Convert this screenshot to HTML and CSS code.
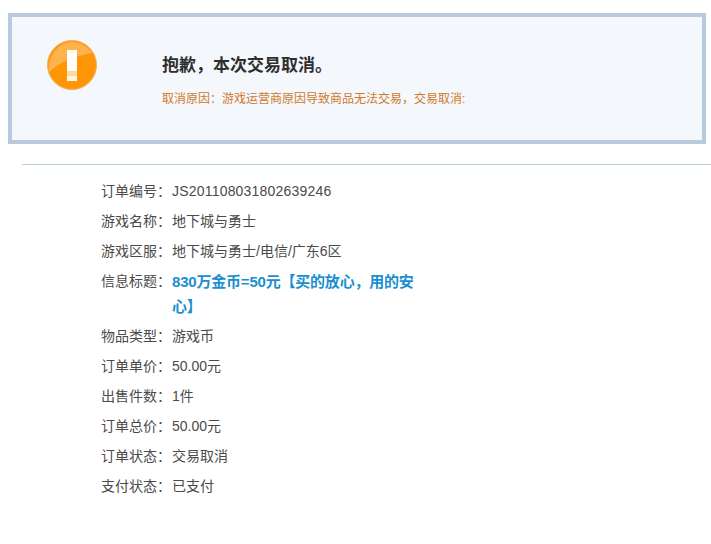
FILE: index.html
```html
<!DOCTYPE html>
<html lang="zh-CN">
<head>
<meta charset="utf-8">
<title>交易取消</title>
<link rel="stylesheet" href="styles.css">
</head>
<body>
<section class="notice">
  <svg class="notice-icon" width="52" height="52" viewBox="0 0 52 52" aria-hidden="true">
    <circle cx="26" cy="26" r="24.5" fill="#ff9608" stroke="#f7ad5e" stroke-width="1"/>
    <path d="M3 33C1 17 13 3 26 3c9 0 16 5 20 11C30 17 15 22 3 33z" fill="#ffffff" opacity="0.28"/>
    <rect x="21" y="11" width="10" height="21" fill="#fffdf6"/>
    <rect x="21" y="32" width="10" height="5" fill="#ffd9a0"/>
    <rect x="21" y="37" width="10" height="5" fill="#fff6e0"/>
  </svg>
  <div class="notice-text">
    <h1 class="notice-title">抱歉，本次交易取消。</h1>
    <p class="notice-reason">取消原因：游戏运营商原因导致商品无法交易，交易取消:</p>
  </div>
</section>
<hr class="rule">
<dl class="details">
  <div class="row"><dt>订单编号：</dt><dd class="code">JS201108031802639246</dd></div>
  <div class="row"><dt>游戏名称：</dt><dd>地下城与勇士</dd></div>
  <div class="row"><dt>游戏区服：</dt><dd>地下城与勇士/电信/广东6区</dd></div>
  <div class="row"><dt>信息标题：</dt><dd class="headline">830万金币=50元【买的放心，用的安心】</dd></div>
  <div class="row"><dt>物品类型：</dt><dd>游戏币</dd></div>
  <div class="row"><dt>订单单价：</dt><dd>50.00元</dd></div>
  <div class="row"><dt>出售件数：</dt><dd>1件</dd></div>
  <div class="row"><dt>订单总价：</dt><dd>50.00元</dd></div>
  <div class="row"><dt>订单状态：</dt><dd>交易取消</dd></div>
  <div class="row"><dt>支付状态：</dt><dd>已支付</dd></div>
</dl>
</body>
</html>
```
FILE: styles.css
```css
* { box-sizing: border-box; }
html, body { margin: 0; padding: 0; background: #fff; }
body {
  font-family: "Liberation Sans", "Noto Sans CJK SC", sans-serif;
  font-size: 14px;
  color: #4a4a4a;
  height: 544px;
  overflow: hidden;
  padding-top: 13px;
}
.notice {
  width: 698px;
  height: 131px;
  margin-left: 8px;
  border: 4px solid #b9c9de;
  background: #f4f7fc;
  display: flex;
  padding: 22px 0 0 34px;
}
.notice-icon { flex: none; }
.notice-text { margin-left: 64px; padding-top: 16px; }
.notice-title {
  margin: 0;
  font-size: 17px;
  line-height: 22px;
  font-weight: 700;
  color: #2f2f2f;
}
.notice-reason {
  margin: 13px 0 0;
  font-size: 12px;
  line-height: 18px;
  color: #cf7a2a;
}
.rule {
  height: 1px;
  border: 0;
  margin: 20px 0 0 22px;
  background: #b4cfdd;
}
.details { margin: 11px 0 0 101px; width: 320px; }
.row { display: flex; }
.row dt { flex: none; width: 71px; line-height: 30px; }
.row dd { margin: 0; flex: 1; line-height: 30px; }
.row .code { letter-spacing: 0.2px; }
.row .headline {
  font-size: 15px;
  letter-spacing: -0.2px;
  font-weight: 700;
  color: #1a8fcf;
  line-height: 25px;
  padding: 3px 0 2px;
}
```
